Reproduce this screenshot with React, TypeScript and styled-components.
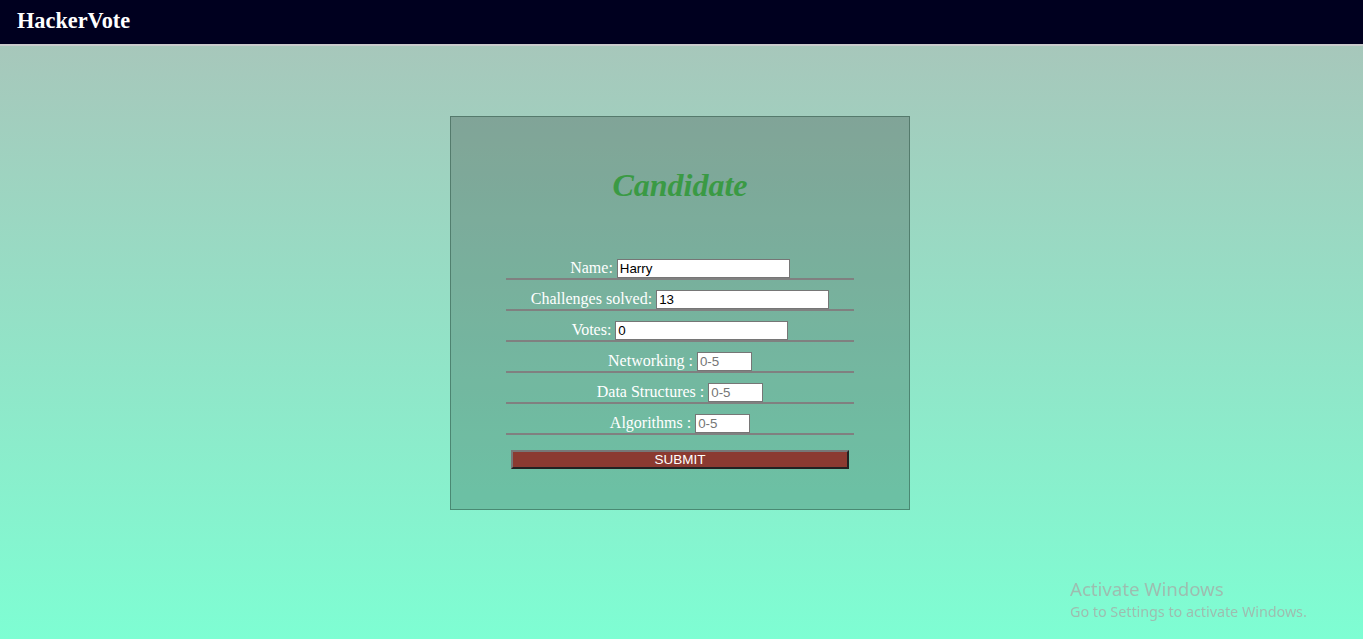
import React from "react";
import styled, { createGlobalStyle } from "styled-components";

const GlobalStyle = createGlobalStyle`
  html, body {
    margin: 0;
    padding: 0;
    height: 100%;
  }
  body {
    font-family: "Liberation Serif", "Times New Roman", serif;
    background: linear-gradient(#aac3b9, #7efed3);
    min-height: 100vh;
  }
  #root {
    min-height: 100vh;
  }
`;

const Header = styled.header`
  height: 44px;
  background: #00001f;
  border-bottom: 2px solid #c9cbcb;
  display: flex;
  align-items: center;
  padding: 0 17px;
`;

const Brand = styled.div`
  color: #fff;
  font-size: 22.3px;
  font-weight: 700;
  margin-top: -3px;
`;

const Main = styled.main`
  display: flex;
  justify-content: center;
  padding: 70px 3px 0 0;
`;

const Card = styled.section`
  width: 458px;
  border: 1px solid rgba(30, 70, 55, 0.45);
  background: rgba(0, 0, 0, 0.2);
  padding: 50px 0 40px;
  display: flex;
  flex-direction: column;
  align-items: center;
`;

const Title = styled.h1`
  margin: 0 0 45px;
  height: 37px;
  font-size: 32px;
  font-style: italic;
  font-weight: 700;
  color: #3a9a44;
  line-height: 37px;
`;

const Form = styled.form`
  width: 348px;
  display: flex;
  flex-direction: column;
`;

const Row = styled.div`
  height: 31px;
  box-sizing: border-box;
  padding-top: 10px;
  border-bottom: 2px solid #808080;
  display: flex;
  justify-content: center;
  align-items: baseline;
  gap: 4px;
`;

const Label = styled.label`
  color: #fff;
  font-size: 16px;
`;

const Input = styled.input<{ $small?: boolean }>`
  box-sizing: border-box;
  width: ${(p) => (p.$small ? "55px" : "173px")};
  height: 19px;
  padding: 1px 2px;
  border: 1px solid #767676;
  background: #fff;
  font-family: "Liberation Sans", Arial, sans-serif;
  font-size: 13.33px;
  color: #000;
  outline: none;
  &::placeholder {
    color: #757575;
  }
`;

const Submit = styled.button`
  margin: 15px 5px 0;
  height: 19px;
  box-sizing: border-box;
  padding: 0;
  background: #8b3a31;
  color: #fff;
  font-family: "Liberation Sans", Arial, sans-serif;
  font-size: 13.5px;
  line-height: 15px;
  border-style: solid;
  border-width: 2px;
  border-color: #777 #222 #222 #777;
  cursor: pointer;
`;

const Watermark = styled.div`
  position: fixed;
  left: 1070px;
  top: 577px;
  font-family: "Noto Sans", "Open Sans", sans-serif;
  color: #9dbdb0;
  pointer-events: none;
`;

const WatermarkTitle = styled.div`
  font-size: 18.6px;
  line-height: 24px;
`;

const WatermarkText = styled.div`
  font-size: 14.3px;
  line-height: 21px;
`;

const fields = [
  { label: "Name:", value: "Harry" },
  { label: "Challenges solved:", value: "13" },
  { label: "Votes:", value: "0" },
];

const skills = ["Networking :", "Data Structures :", "Algorithms :"];

export default function App() {
  return (
    <>
      <GlobalStyle />
      <Header>
        <Brand>HackerVote</Brand>
      </Header>
      <Main>
        <Card>
          <Title>Candidate</Title>
          <Form onSubmit={(e) => e.preventDefault()}>
            {fields.map((f) => (
              <Row key={f.label}>
                <Label>{f.label}</Label>
                <Input type="text" defaultValue={f.value} />
              </Row>
            ))}
            {skills.map((s) => (
              <Row key={s}>
                <Label>{s}</Label>
                <Input $small type="text" placeholder="0-5" />
              </Row>
            ))}
            <Submit type="submit">SUBMIT</Submit>
          </Form>
        </Card>
      </Main>
      <Watermark>
        <WatermarkTitle>Activate Windows</WatermarkTitle>
        <WatermarkText>Go to Settings to activate Windows.</WatermarkText>
      </Watermark>
    </>
  );
}
